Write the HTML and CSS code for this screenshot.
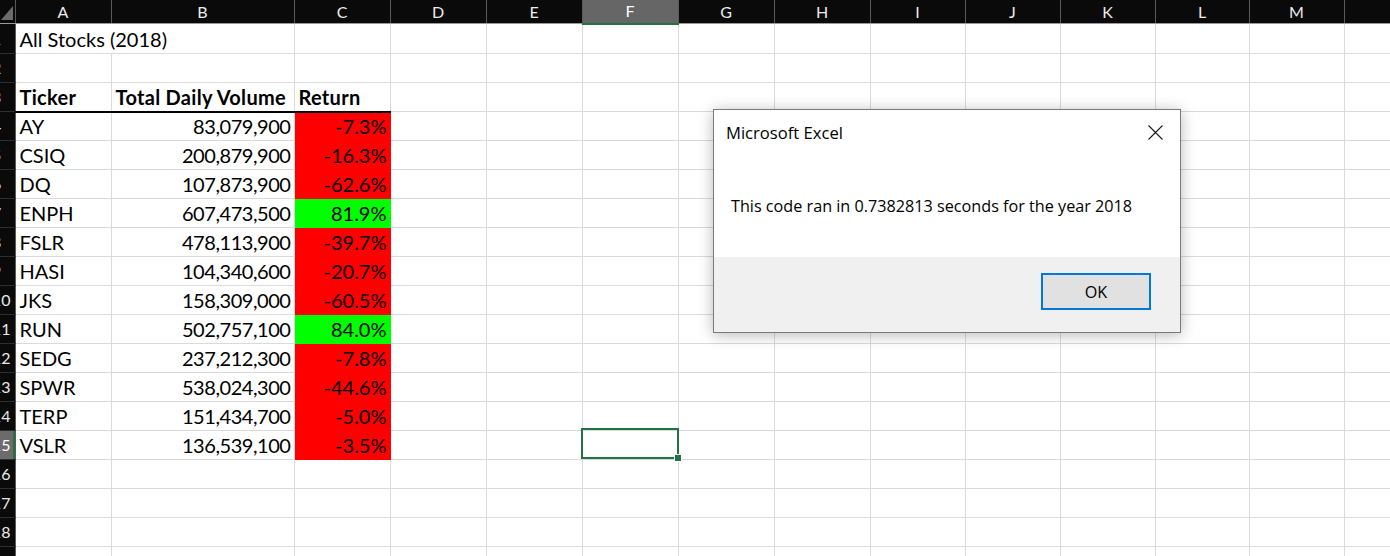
FILE: index.html
```html
<!DOCTYPE html>
<html>
<head>
<meta charset="utf-8">
<title>Excel</title>
<link rel="stylesheet" href="styles.css">
</head>
<body>
<div class="sheet">
  <table class="grid">
    <colgroup>
      <col class="c-rh"><col class="c-a"><col class="c-b"><col class="c-std"><col class="c-std"><col class="c-std"><col class="c-std"><col class="c-std"><col class="c-std"><col class="c-95"><col class="c-95"><col class="c-95"><col class="c-94"><col class="c-95"><col class="c-n">
    </colgroup>
    <thead>
      <tr class="colhead">
        <th class="corner"><svg width="15" height="23" viewBox="0 0 15 23"><polygon points="1,20 13,20 13,6" fill="#6b6b6b"/></svg></th>
        <th>A</th><th>B</th><th>C</th><th>D</th><th>E</th><th class="sel">F</th><th>G</th><th>H</th><th>I</th><th>J</th><th>K</th><th>L</th><th>M</th><th></th>
      </tr>
    </thead>
    <tbody>
      <tr><th class="rh"><span>1</span></th><td colspan="2">All Stocks (2018)</td><td></td><td></td><td></td><td></td><td></td><td></td><td></td><td></td><td></td><td></td><td></td><td></td></tr>
      <tr><th class="rh"><span>2</span></th><td></td><td></td><td></td><td></td><td></td><td></td><td></td><td></td><td></td><td></td><td></td><td></td><td></td><td></td></tr>
      <tr class="hdr"><th class="rh"><span>3</span></th><td class="b">Ticker</td><td class="b">Total Daily Volume</td><td class="b">Return</td><td></td><td></td><td></td><td></td><td></td><td></td><td></td><td></td><td></td><td></td><td></td></tr>
      <tr class="first"><th class="rh"><span>4</span></th><td>AY</td><td class="num">83,079,900</td><td class="num neg">-7.3%</td><td></td><td></td><td></td><td></td><td></td><td></td><td></td><td></td><td></td><td></td><td></td></tr>
      <tr><th class="rh"><span>5</span></th><td>CSIQ</td><td class="num">200,879,900</td><td class="num neg">-16.3%</td><td></td><td></td><td></td><td></td><td></td><td></td><td></td><td></td><td></td><td></td><td></td></tr>
      <tr><th class="rh"><span>6</span></th><td>DQ</td><td class="num">107,873,900</td><td class="num neg">-62.6%</td><td></td><td></td><td></td><td></td><td></td><td></td><td></td><td></td><td></td><td></td><td></td></tr>
      <tr><th class="rh"><span>7</span></th><td>ENPH</td><td class="num">607,473,500</td><td class="num pos">81.9%</td><td></td><td></td><td></td><td></td><td></td><td></td><td></td><td></td><td></td><td></td><td></td></tr>
      <tr><th class="rh"><span>8</span></th><td>FSLR</td><td class="num">478,113,900</td><td class="num neg">-39.7%</td><td></td><td></td><td></td><td></td><td></td><td></td><td></td><td></td><td></td><td></td><td></td></tr>
      <tr><th class="rh"><span>9</span></th><td>HASI</td><td class="num">104,340,600</td><td class="num neg">-20.7%</td><td></td><td></td><td></td><td></td><td></td><td></td><td></td><td></td><td></td><td></td><td></td></tr>
      <tr><th class="rh"><span>10</span></th><td>JKS</td><td class="num">158,309,000</td><td class="num neg">-60.5%</td><td></td><td></td><td></td><td></td><td></td><td></td><td></td><td></td><td></td><td></td><td></td></tr>
      <tr><th class="rh"><span>11</span></th><td>RUN</td><td class="num">502,757,100</td><td class="num pos">84.0%</td><td></td><td></td><td></td><td></td><td></td><td></td><td></td><td></td><td></td><td></td><td></td></tr>
      <tr><th class="rh"><span>12</span></th><td>SEDG</td><td class="num">237,212,300</td><td class="num neg">-7.8%</td><td></td><td></td><td></td><td></td><td></td><td></td><td></td><td></td><td></td><td></td><td></td></tr>
      <tr><th class="rh"><span>13</span></th><td>SPWR</td><td class="num">538,024,300</td><td class="num neg">-44.6%</td><td></td><td></td><td></td><td></td><td></td><td></td><td></td><td></td><td></td><td></td><td></td></tr>
      <tr><th class="rh"><span>14</span></th><td>TERP</td><td class="num">151,434,700</td><td class="num neg">-5.0%</td><td></td><td></td><td></td><td></td><td></td><td></td><td></td><td></td><td></td><td></td><td></td></tr>
      <tr><th class="rh rsel"><span>15</span></th><td>VSLR</td><td class="num">136,539,100</td><td class="num neg">-3.5%</td><td></td><td></td><td></td><td></td><td></td><td></td><td></td><td></td><td></td><td></td><td></td></tr>
      <tr><th class="rh"><span>16</span></th><td></td><td></td><td></td><td></td><td></td><td></td><td></td><td></td><td></td><td></td><td></td><td></td><td></td><td></td></tr>
      <tr><th class="rh"><span>17</span></th><td></td><td></td><td></td><td></td><td></td><td></td><td></td><td></td><td></td><td></td><td></td><td></td><td></td><td></td></tr>
      <tr><th class="rh"><span>18</span></th><td></td><td></td><td></td><td></td><td></td><td></td><td></td><td></td><td></td><td></td><td></td><td></td><td></td><td></td></tr>
      <tr><th class="rh"><span>19</span></th><td></td><td></td><td></td><td></td><td></td><td></td><td></td><td></td><td></td><td></td><td></td><td></td><td></td><td></td></tr>
    </tbody>
  </table>

  <div class="selection"><div class="handle"></div></div>

  <div class="dialog">
    <div class="dlg-title">
      <span>Microsoft Excel</span>
      <svg class="dlg-close" width="15" height="15" viewBox="0 0 15 15"><path d="M0.5 0.5 L14.5 14.5 M14.5 0.5 L0.5 14.5" stroke="#1a1a1a" stroke-width="1.1" fill="none"/></svg>
    </div>
    <div class="dlg-body">This code ran in 0.7382813 seconds for the year 2018</div>
    <div class="dlg-foot"><button class="ok">OK</button></div>
  </div>
</div>
</body>
</html>
```
FILE: styles.css
```css
html, body {
  margin: 0;
  padding: 0;
  background: #ffffff;
}
.sheet {
  position: relative;
  width: 1390px;
  height: 556px;
  overflow: hidden;
}
.grid {
  border-collapse: collapse;
  table-layout: fixed;
  width: 1444px;
  font-family: Lato, "Liberation Sans", sans-serif;
  font-size: 20px;
  color: #000;
}
.c-rh { width: 15px; }
.c-a { width: 96px; }
.c-b { width: 183px; }
.c-std { width: 96px; }
.c-95 { width: 95px; }
.c-94 { width: 94px; }
.c-n { width: 100px; }

.colhead th {
  height: 22px;
  padding: 0;
  background: #0a0a0a;
  color: #ececec;
  font-family: Lato, "Liberation Sans", sans-serif;
  font-weight: normal;
  font-size: 16px;
  line-height: 22px;
  text-align: center;
  border-right: 1px solid #5a5a5a;
  border-bottom: 1px solid #9a9a9a;
}
.colhead th.corner {
  border-right: 1px solid #5a5a5a;
}
.corner svg { display: block; }
.colhead th.sel {
  background: #666666;
  color: #ffffff;
  border-bottom: 2px solid #217346;
}
.rh {
  padding: 0;
  background: #0a0a0a;
  color: #e8e8e8;
  font-weight: normal;
  font-size: 16px;
  overflow: hidden;
  border-bottom: 1px solid #2e2e2e;
  border-right: 1px solid #5a5a5a;
}
.rh span {
  display: block;
  width: 30px;
  margin-left: -8px;
  text-align: left;
}
.rh.rsel {
  background: #6b6b6b;
  color: #fff;
  box-shadow: inset -2px 0 0 #217346;
}
td {
  height: 28px;
  padding: 0 3px 0 4px;
  border: 1px solid #dadada;
  line-height: 28px;
  white-space: nowrap;
  overflow: hidden;
  vertical-align: bottom;
}
.first td { height: 27px; line-height: 27px; }
td.b { font-weight: bold; letter-spacing: 0.3px; }
.hdr td.b { border-bottom: 2px solid #000; }
td.num { text-align: right; }
td.num:not(.neg):not(.pos) { letter-spacing: -0.45px; }
td.neg { background: #ff0000; border-color: #ff0000; }
td.pos { background: #00ff00; border-color: #00ff00; }

.selection {
  position: absolute;
  left: 581px;
  top: 428px;
  width: 98px;
  height: 31px;
  box-sizing: border-box;
  border: 2px solid #217346;
}
.handle {
  position: absolute;
  right: -5px;
  bottom: -5px;
  width: 6px;
  height: 6px;
  background: #217346;
  border: 1px solid #fff;
}

.dialog {
  position: absolute;
  left: 713px;
  top: 109px;
  width: 466px;
  height: 222px;
  border: 1px solid #7a7a7a;
  background: #fff;
  box-shadow: 0 2px 14px rgba(0,0,0,0.28);
  display: flex;
  flex-direction: column;
  font-family: "Segoe UI", "Open Sans", sans-serif;
  color: #000;
}
.dlg-title {
  height: 44px;
  display: flex;
  align-items: center;
  justify-content: space-between;
  padding: 0 17px 0 12px;
  font-size: 16.6px;
}
.dlg-close { display: block; }
.dlg-body {
  flex: 1;
  display: flex;
  align-items: center;
  padding-left: 17px;
  font-size: 16.2px;
}
.dlg-foot {
  height: 75px;
  background: #f0f0f0;
  display: flex;
  justify-content: flex-end;
  align-items: flex-start;
  padding: 16px 29px 0 0;
  box-sizing: border-box;
}
.ok {
  width: 110px;
  height: 37px;
  box-sizing: border-box;
  border: 2px solid #0078d7;
  background: #e1e1e1;
  font-family: "Segoe UI", "Open Sans", sans-serif;
  font-size: 16.2px;
  color: #000;
  padding: 0;
}
```
